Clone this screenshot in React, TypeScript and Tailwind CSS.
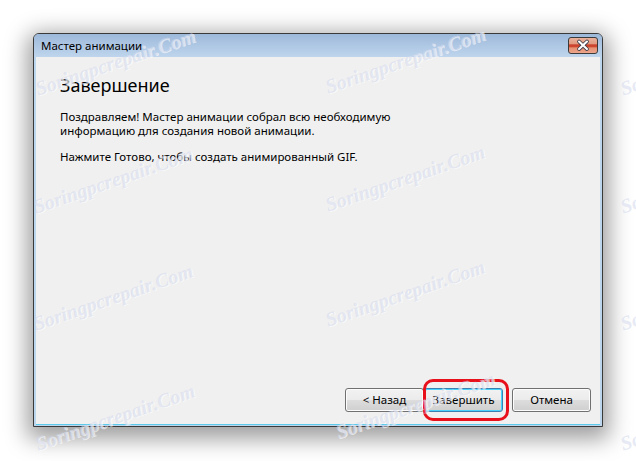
import React from 'react';

/* watermark spots: centre of each rotated label */
const MARKS = [
  'left-[115px] top-[62px]',
  'left-[405px] top-[60px]',
  'left-[700px] top-[62px]',
  'left-[113px] top-[180px]',
  'left-[405px] top-[178px]',
  'left-[700px] top-[180px]',
  'left-[113px] top-[297px]',
  'left-[405px] top-[293px]',
  'left-[700px] top-[297px]',
  'left-[115px] top-[417px]',
  'left-[415px] top-[405px]',
  'left-[700px] top-[417px]',
];

function CloseButton() {
  return (
    <div className="w-[30px] h-[17px] rounded-[3px] border border-[#3b3b3b] overflow-hidden relative bg-[linear-gradient(to_bottom,#eab29c_0%,#e09a80_40%,#c8402b_45%,#d2492f_60%,#e48f72_65%,#eca68c_100%)]">
      <svg
        viewBox="0 0 30 17"
        className="absolute inset-0 w-full h-full"
        aria-hidden="true"
      >
        <path
          d="M10.5 4 L19.5 12.5 M19.5 4 L10.5 12.5"
          stroke="#3a3a4a"
          strokeWidth="4.2"
          strokeLinecap="round"
        />
        <path
          d="M10.5 4 L19.5 12.5 M19.5 4 L10.5 12.5"
          stroke="#ffffff"
          strokeWidth="2.4"
          strokeLinecap="round"
        />
      </svg>
    </div>
  );
}

function WizButton({
  label,
  primary = false,
}: {
  label: string;
  primary?: boolean;
}) {
  return (
    <button
      className={`w-[79px] h-[24px] rounded-[3px] border text-[11.5px] text-black flex items-center justify-center bg-[linear-gradient(to_bottom,#f2f2f2_0%,#ebebeb_50%,#dddddd_50%,#cfcfcf_100%)] ${
        primary
          ? 'border-[#3c7fb1] shadow-[inset_0_0_0_1px_#48d3fb]'
          : 'border-[#707070] shadow-[inset_0_0_0_1px_#fcfcfc]'
      }`}
    >
      {label}
    </button>
  );
}

export default function App() {
  return (
    <div className="relative w-[636px] h-[461px] bg-white overflow-hidden font-['Noto_Sans',sans-serif]">
      <div className="pt-[33px] pl-[33px]">
        <div className="w-[570px] h-[394px] flex flex-col rounded-t-[6px] border border-[#3a3a3a] bg-[#bcd6ee] shadow-[0_6px_22px_6px_rgba(0,0,0,0.38)]">
          {/* title bar */}
          <div className="h-[23px] flex items-center justify-between pl-[7px] pr-[4px] rounded-t-[5px] bg-[linear-gradient(to_bottom,#9db9da,#bfd5ed)]">
            <span className="text-[11.5px] text-black leading-none">
              Мастер анимации
            </span>
            <CloseButton />
          </div>

          {/* client area */}
          <div className="flex-1 mx-[2px] mb-[1px] border-b border-[#5ccbeb] flex flex-col bg-[#f0f0f0]">
            <div className="pl-[24px] pt-[16px] pr-4">
              <h1 className="text-[18px] leading-[24px] text-black font-normal">
                Завершение
              </h1>
              <p className="mt-[13px] text-[11.5px] leading-[14px] text-black">
                Поздравляем! Мастер анимации собрал всю необходимую
                <br />
                информацию для создания новой анимации.
              </p>
              <p className="mt-[12px] text-[11.5px] leading-[14px] text-black">
                Нажмите Готово, чтобы создать анимированный GIF.
              </p>
            </div>

            <div className="mt-auto flex justify-end pr-[9px] pb-[12px]">
              <WizButton label="< Назад" />
              <div className="relative">
                <WizButton label="Завершить" primary />
                <div className="absolute left-[-1px] top-[-9px] w-[86px] h-[42px] rounded-[10px] border-[3px] border-[#e8111b] pointer-events-none" />
              </div>
              <div className="ml-[9px]">
                <WizButton label="Отмена" />
              </div>
            </div>
          </div>
        </div>
      </div>

      {/* site watermark */}
      {MARKS.map((pos, i) => (
        <span
          key={i}
          className={`absolute ${pos} -translate-x-1/2 -translate-y-1/2 -rotate-[19deg] whitespace-nowrap pointer-events-none font-['Liberation_Serif',serif] italic font-bold text-[20px] text-[#d3d9ec]/55 [text-shadow:1px_1px_0_rgba(255,255,255,0.6)]`}
        >
          Soringpcrepair.Com
        </span>
      ))}
    </div>
  );
}
